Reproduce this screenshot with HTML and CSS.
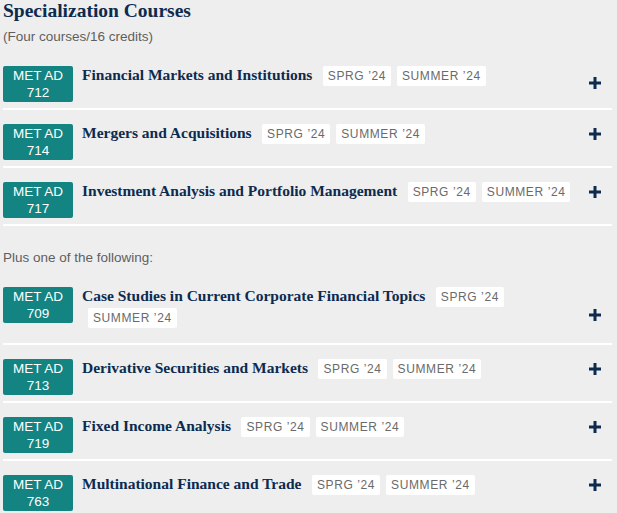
FILE: index.html
```html
<!DOCTYPE html>
<html lang="en">
<head>
<meta charset="utf-8">
<title>Specialization Courses</title>
<link rel="stylesheet" href="styles.css">
</head>
<body>
<section class="spec">
  <h2 class="spec-title">Specialization Courses</h2>
  <p class="spec-sub">(Four courses/16 credits)</p>

  <div class="course course--first">
    <div class="badge">MET AD<br>712</div>
    <div class="course-body"><span class="course-name">Financial Markets and Institutions</span> <span class="tag">SPRG ’24</span><span class="tag">SUMMER ’24</span></div>
    <svg class="plus" viewBox="0 0 12 12" aria-hidden="true"><rect x="4.5" y="0" width="3" height="12"/><rect x="0" y="4.5" width="12" height="3"/></svg>
  </div>

  <div class="course">
    <div class="badge">MET AD<br>714</div>
    <div class="course-body"><span class="course-name">Mergers and Acquisitions</span> <span class="tag">SPRG ’24</span><span class="tag">SUMMER ’24</span></div>
    <svg class="plus" viewBox="0 0 12 12" aria-hidden="true"><rect x="4.5" y="0" width="3" height="12"/><rect x="0" y="4.5" width="12" height="3"/></svg>
  </div>

  <div class="course">
    <div class="badge">MET AD<br>717</div>
    <div class="course-body"><span class="course-name">Investment Analysis and Portfolio Management</span> <span class="tag">SPRG ’24</span><span class="tag">SUMMER ’24</span></div>
    <svg class="plus" viewBox="0 0 12 12" aria-hidden="true"><rect x="4.5" y="0" width="3" height="12"/><rect x="0" y="4.5" width="12" height="3"/></svg>
  </div>

  <p class="spec-note">Plus one of the following:</p>

  <div class="course course--wrap">
    <div class="badge">MET AD<br>709</div>
    <div class="course-body"><span class="course-name">Case Studies in Current Corporate Financial Topics</span> <span class="tag">SPRG ’24</span><span class="tag">SUMMER ’24</span></div>
    <svg class="plus" viewBox="0 0 12 12" aria-hidden="true"><rect x="4.5" y="0" width="3" height="12"/><rect x="0" y="4.5" width="12" height="3"/></svg>
  </div>

  <div class="course">
    <div class="badge">MET AD<br>713</div>
    <div class="course-body"><span class="course-name">Derivative Securities and Markets</span> <span class="tag">SPRG ’24</span><span class="tag">SUMMER ’24</span></div>
    <svg class="plus" viewBox="0 0 12 12" aria-hidden="true"><rect x="4.5" y="0" width="3" height="12"/><rect x="0" y="4.5" width="12" height="3"/></svg>
  </div>

  <div class="course">
    <div class="badge">MET AD<br>719</div>
    <div class="course-body"><span class="course-name">Fixed Income Analysis</span> <span class="tag">SPRG ’24</span><span class="tag">SUMMER ’24</span></div>
    <svg class="plus" viewBox="0 0 12 12" aria-hidden="true"><rect x="4.5" y="0" width="3" height="12"/><rect x="0" y="4.5" width="12" height="3"/></svg>
  </div>

  <div class="course">
    <div class="badge">MET AD<br>763</div>
    <div class="course-body"><span class="course-name">Multinational Finance and Trade</span> <span class="tag">SPRG ’24</span><span class="tag">SUMMER ’24</span></div>
    <svg class="plus" viewBox="0 0 12 12" aria-hidden="true"><rect x="4.5" y="0" width="3" height="12"/><rect x="0" y="4.5" width="12" height="3"/></svg>
  </div>
</section>
</body>
</html>
```
FILE: styles.css
```css
html, body {
  margin: 0;
  padding: 0;
  background: #eeeeee;
}

.spec {
  width: 609px;
  padding-left: 3px;
  font-family: "Liberation Sans", Arial, sans-serif;
}

.spec-title {
  margin: 0;
  font-family: "Liberation Serif", "Times New Roman", serif;
  font-weight: bold;
  font-size: 19.5px;
  line-height: 22px;
  color: #0c2b4e;
}

.spec-sub {
  margin: 7px 0 7px;
  font-size: 13.5px;
  line-height: 16px;
  color: #5f5f5f;
}

.spec-note {
  margin: 24px 0 7px;
  font-size: 13.5px;
  line-height: 16px;
  color: #5f5f5f;
}

.course {
  display: flex;
  align-items: flex-start;
  padding: 14px 0 6px;
  border-bottom: 2px solid #ffffff;
}

.course--wrap {
  padding-bottom: 15px;
}

.badge {
  flex: none;
  width: 70px;
  height: 36px;
  padding-top: 1px;
  box-sizing: border-box;
  background: #148482;
  border-radius: 2px;
  color: #ffffff;
  font-size: 13.5px;
  line-height: 17px;
  text-align: center;
}

.course-body {
  flex: 1;
  margin: -1px 0 0 9px;
  line-height: 19px;
}

.course-name {
  font-family: "Liberation Serif", "Times New Roman", serif;
  font-weight: bold;
  font-size: 15.5px;
  color: #0c2b4e;
}

.tag {
  display: inline-block;
  margin-left: 6px;
  padding: 0 5px;
  background: #ffffff;
  border-radius: 2px;
  font-size: 12px;
  line-height: 20px;
  letter-spacing: 0.6px;
  color: #6a6a6a;
}

.plus {
  flex: none;
  width: 12px;
  height: 12px;
  margin: 4px 11px 0 12px;
  fill: #0c2b4e;
}

.course--first .plus {
  margin-top: 11px;
}

.course--wrap .plus {
  margin-top: 22px;
}
```
